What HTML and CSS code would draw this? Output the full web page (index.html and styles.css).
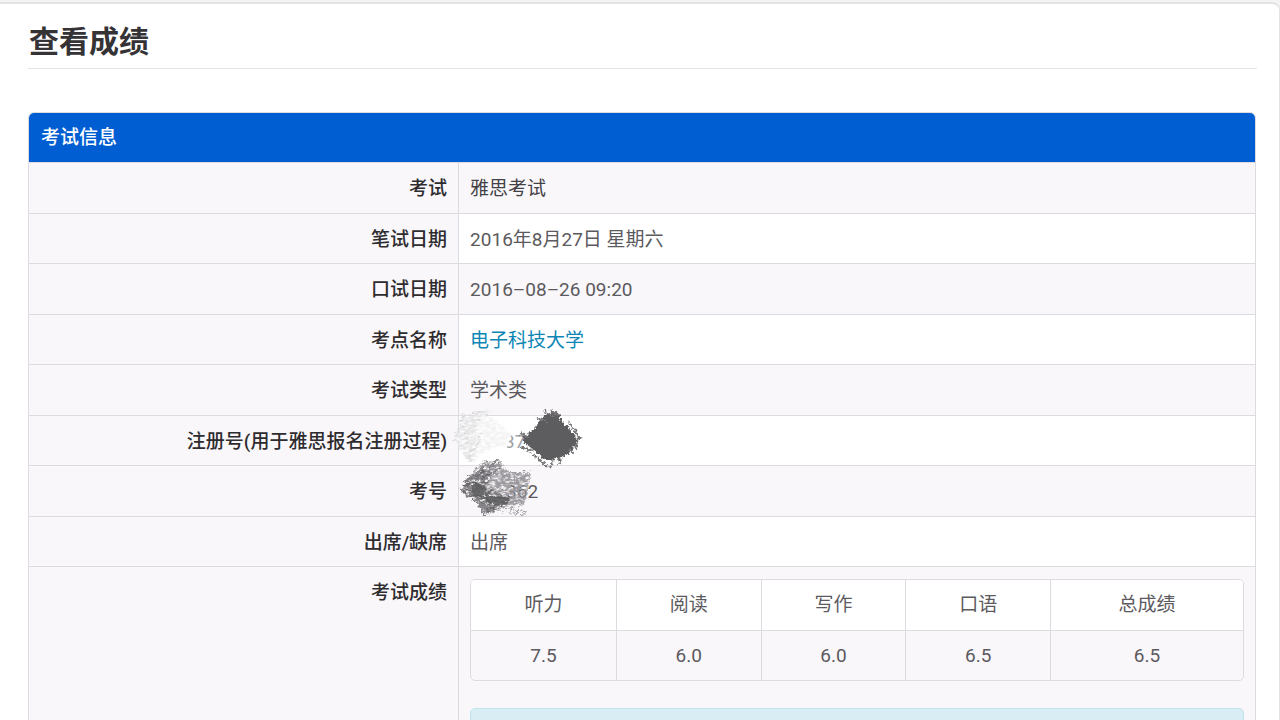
FILE: index.html
```html
<!DOCTYPE html>
<html lang="zh-CN">
<head>
	<meta charset="UTF-8">
	<title>查看成绩</title>
	<link rel="stylesheet" href="styles.css">
</head>
<body>
	<div class="page">
		<h1>查看成绩</h1>
		<table class="info">
			<colgroup>
				<col class="label">
				<col>
			</colgroup>
			<thead>
				<tr><th colspan="2">考试信息</th></tr>
			</thead>
			<tbody>
				<tr><th scope="row">考试</th><td class="dark">雅思考试</td></tr>
				<tr><th scope="row">笔试日期</th><td>2016年8月27日 星期六</td></tr>
				<tr><th scope="row">口试日期</th><td>2016–08–26 09:20</td></tr>
				<tr><th scope="row">考点名称</th><td><a href="#">电子科技大学</a></td></tr>
				<tr><th scope="row">考试类型</th><td>学术类</td></tr>
				<tr>
					<th scope="row">注册号(用于雅思报名注册过程)</th>
					<td class="masked">
						<span class="reg">37</span>
						<svg class="scribble" viewBox="440 400 160 125" aria-hidden="true">
							<defs>
								<filter id="rough" x="-20%" y="-20%" width="140%" height="140%">
									<feTurbulence type="fractalNoise" baseFrequency="0.35" numOctaves="2" seed="4" result="n"/>
									<feDisplacementMap in="SourceGraphic" in2="n" scale="7" xChannelSelector="R" yChannelSelector="G"/>
								</filter>
								<filter id="chalk" x="-20%" y="-20%" width="140%" height="140%">
									<feTurbulence type="fractalNoise" baseFrequency="0.2 0.4" numOctaves="3" seed="9" result="n"/>
									<feColorMatrix in="n" type="matrix" values="0 0 0 0 0  0 0 0 0 0  0 0 0 0 0  3 0 0 0 -0.8" result="m"/>
									<feDisplacementMap in="SourceGraphic" in2="n" scale="9" xChannelSelector="R" yChannelSelector="G" result="d"/>
									<feComposite in="d" in2="m" operator="in"/>
								</filter>
							</defs>
							<!-- 浅色涂抹 -->
							<path d="M462 418L488 416L500 422L511 432L506 448L488 455L473 462L462 455L455 437Z" fill="#fff" opacity=".9"/>
							<g filter="url(#chalk)">
								<path d="M461 415L484 413L490 422L480 434L478 448L474 463L464 458L454 438Z" fill="#e6e6e8"/>
								<path d="M478 414L494 420L511 434L503 446L488 450L474 458Z" fill="#f3f3f4"/>
								<path d="M460 418L472 457M464 414L454 440M472 411L489 413M462 432L480 418M468 462L482 434" stroke="#dadadc" stroke-width="2" fill="none"/>
							</g>
							<!-- 注册号 -->
							<path d="M549 413L557 412L561 421L574 435L576 444L568 454L556 460L546 461L537 454L524 443L521 437L533 429L542 417Z" fill="#5d5b5e" filter="url(#rough)"/>
							<path d="M543 410L552 417M549 410L558 416M536 419L546 421M567 422L574 431M574 430L579 439M577 437L575 449M519 433L528 437M520 447L531 451M531 454L541 461M540 461L546 467M552 461L549 468M560 457L558 465M568 449L573 454" stroke="#79777a" stroke-width="2" fill="none" filter="url(#rough)"/>
							<!-- 考号 -->
							<g filter="url(#chalk)">
								<path d="M466 479L477 466L487 461L500 461L506 472L530 473L528 489L523 505L498 509L487 515L479 504L463 492Z" fill="#9b999d"/>
								<path d="M464 481L480 468L492 474L485 487L504 495L511 503L489 514L478 504L461 492Z" fill="#69676b"/>
							</g>
							<g filter="url(#rough)" fill="none" stroke="#858388">
								<path d="M463 482L470 477M460 490L474 486M465 497L479 488M470 479L487 463M475 482L497 460M480 482L501 466M470 491L487 514M476 499L484 516M481 503L491 511" stroke-width="2"/>
								<path d="M500 473L529 475M498 479L528 480M494 485L514 486M504 501L524 502M496 507L526 512M501 512L525 514" stroke-width="1" stroke="#a09ea3"/>
							</g>
							<path d="M470 483L482 484L486 491L481 497L473 496Z M484 496L499 496L509 499L502 505L488 504Z" fill="#5d5b5e" opacity=".85" filter="url(#rough)"/>
						</svg>
					</td>
				</tr>
				<tr><th scope="row">考号</th><td><span class="num">362</span></td></tr>
				<tr><th scope="row">出席/缺席</th><td>出席</td></tr>
				<tr>
					<th scope="row">考试成绩</th>
					<td>
						<table class="score">
							<thead>
								<tr><th>听力</th><th>阅读</th><th>写作</th><th>口语</th><th class="total">总成绩</th></tr>
							</thead>
							<tbody>
								<tr><td>7.5</td><td>6.0</td><td>6.0</td><td>6.5</td><td>6.5</td></tr>
							</tbody>
						</table>
						<div class="alert"></div>
					</td>
				</tr>
			</tbody>
		</table>
	</div>
</body>
</html>
```
FILE: styles.css
```css
*{
	margin:0;
	padding:0;
	box-sizing:border-box;
}
body{
	background:#f4f4f5;
	padding-top:2px;
	color:#5c5a5e;
	font:19px/26px Roboto,"Noto Sans CJK SC",sans-serif;
}
.page{
	min-height:100vh;
	padding:16px 22px 0 28px;
	background:#fff;
	border-top:2px solid #e3e3e4;
	border-right:1px solid #e3e3e4;
	border-top-right-radius:8px;
}
h1{
	height:49px;
	padding-left:1px;
	margin-bottom:43px;
	border-bottom:1px solid #e4e4e4;
	color:#353335;
	font-size:30px;
	line-height:44px;
	font-weight:700;
}
table{
	width:100%;
	border-collapse:separate;
	border-spacing:0;
	table-layout:fixed;
}
.info{
	width:calc(100% - 1px);
	border:1px solid #dddbdf;
	border-radius:6px;
}
.label{
	width:35%;
}
.info > thead th{
	height:49px;
	padding:1px 12px 0;
	background:#005ed2;
	border-radius:5px 5px 0 0;
	color:#fff;
	text-align:left;
	font-weight:500;
}
.info > tbody > tr > th,
.info > tbody > tr > td{
	height:51px;
	padding:13px 11px 11px;
	border-top:1px solid #dddbdf;
	vertical-align:top;
}
.info > tbody > tr:nth-child(even) > th,
.info > tbody > tr:nth-child(even) > td{
	height:50px;
	padding-bottom:10px;
}
.info > tbody > tr > th{
	background:#f9f7fa;
	color:#2e2c2f;
	text-align:right;
	font-weight:500;
}
.info > tbody > tr > td{
	border-left:1px solid #dddbdf;
}
.info > tbody > tr:nth-child(odd) > td{
	background:#f9f7fa;
}
.info > tbody > tr:last-child > td{
	padding-top:12px;
}
.info .dark{
	color:#434145;
}
a{
	color:#0d86b5;
	text-decoration:none;
}
/* 涂抹遮挡 */
.masked{
	position:relative;
	z-index:1;
}
.scribble{
	position:absolute;
	left:-18px;
	top:-16px;
	width:160px;
	height:125px;
}
.reg{
	margin-left:34px;
	color:#a3a1a5;
}
.num{
	margin-left:36px;
}
/* 成绩表 */
.score{
	border:1px solid #dddbdf;
	border-radius:5px;
	text-align:center;
}
.score th,
.score td{
	height:50px;
	font-weight:400;
	border-left:1px solid #dddbdf;
}
.score th:first-child,
.score td:first-child{
	border-left:0;
}
.score th{
	background:#fff;
}
.score th:first-child{
	border-top-left-radius:4px;
}
.score th:last-child{
	border-top-right-radius:4px;
}
.score td{
	border-top:1px solid #dddbdf;
}
.score .total{
	width:25%;
}
.alert{
	min-height:50px;
	margin-top:27px;
	background:#d9edf5;
	border:1px solid #bfe3ec;
	border-radius:5px;
}
```
